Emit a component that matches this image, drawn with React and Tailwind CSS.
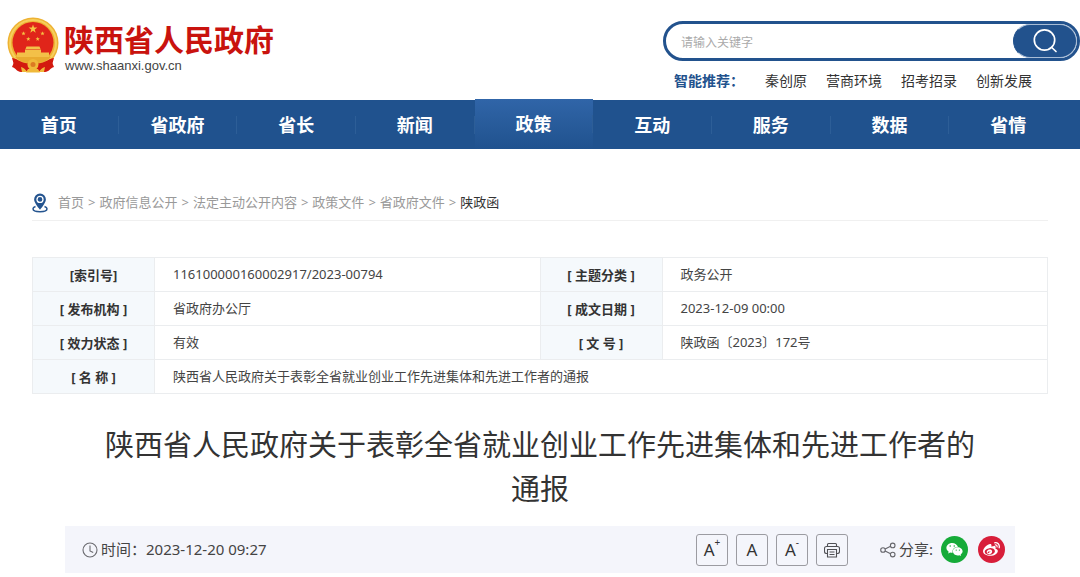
import React, { useState } from 'react'
import { FaWeixin, FaWeibo } from 'react-icons/fa'

const navItems = ['首页', '省政府', '省长', '新闻', '政策', '互动', '服务', '数据', '省情']
const hotWords = ['秦创原', '营商环境', '招考招录', '创新发展']
const crumbs = ['首页', '政府信息公开', '法定主动公开内容', '政策文件', '省政府文件']

const rows = [
  ['[索引号]', '116100000160002917/2023-00794', '[ 主题分类 ]', '政务公开'],
  ['[ 发布机构 ]', '省政府办公厅', '[ 成文日期 ]', '2023-12-09 00:00'],
  ['[ 效力状态 ]', '有效', '[ 文 号 ]', '陕政函〔2023〕172号'],
]

const Star = ({ x, y, r }) => (
  <path
    transform={`translate(${x} ${y}) scale(${r})`}
    fill="#f6c544"
    d="M0-1 .23-.31H.95L.37.12.59.81 0 .39-.59.81-.37.12-.95-.31H-.23Z"
  />
)

const Emblem = () => (
  <svg viewBox="0 0 52 56" className="w-[52px] h-[56px] shrink-0" aria-hidden="true">
    <path d="M8 43 5 50c4 1 5 5 9 5h24c4 0 5-4 9-5l-3-7Z" fill="#d3190f" />
    <circle cx="26" cy="26" r="25.5" fill="#eeb233" />
    <circle cx="26" cy="26" r="23" fill="none" stroke="#f6cf5c" strokeWidth="2" />
    <circle cx="26" cy="25.5" r="20.5" fill="#e0251a" />
    <Star x={26} y={12} r={4.6} />
    <Star x={16.5} y={16.5} r={2.3} />
    <Star x={35.5} y={16.5} r={2.3} />
    <Star x={21.3} y={22} r={2.3} />
    <Star x={30.7} y={22} r={2.3} />
    <path d="M19.5 29.5h13l1 2.5h-15ZM18 32.5h16v3H18ZM10 35.5h32v4.5H10Z" fill="#f3c048" />
    <path d="M8 40h36c-4 4-10 6-18 6S12 44 8 40Z" fill="#e9ab30" />
    <path d="M5 41c4 0 8 4 13 5 4 1 12 1 16 0 5-1 9-5 13-5l-2 7c-4-1-7 3-11 4H18c-4-1-7-5-11-4Z" fill="#d3190f" />
    <circle cx="26" cy="47.5" r="5.5" fill="#f0b93a" />
    <circle cx="26" cy="47.5" r="2.5" fill="#dc7a22" />
    <path d="M14 50c3 1 4 2 6 5h-5ZM38 50c-3 1-4 2-6 5h5ZM21 52h10l2 3.5H19Z" fill="#f0b93a" />
  </svg>
)

const PinIcon = () => (
  <svg viewBox="0 0 16 20" className="w-4 h-5" fill="none" aria-hidden="true">
    <path d="M3.5 13.5C2 14 1 14.7 1 15.7 1 17.5 4 18.7 8 18.7s7-1.2 7-3c0-1-1-1.7-2.5-2.2" stroke="#24548f" strokeWidth="1.5" />
    <path d="M8 .5a5.9 5.9 0 0 0-5.9 5.9C2.1 10 8 16.6 8 16.6S13.9 10 13.9 6.4A5.9 5.9 0 0 0 8 .5Z" fill="#24548f" />
    <circle cx="8" cy="6.4" r="3" fill="#24548f" stroke="#fff" strokeWidth="1.3" />
  </svg>
)

const SearchIcon = () => (
  <svg viewBox="0 0 26 26" className="w-[26px] h-[26px]" fill="none" stroke="#fff" strokeWidth="1.7" strokeLinecap="round" aria-hidden="true">
    <circle cx="12.5" cy="12" r="10.2" />
    <path d="m19.8 19.5 4.2 4" />
  </svg>
)

const ClockIcon = () => (
  <svg viewBox="0 0 16 16" className="w-4 h-4" fill="none" stroke="#6b6b70" strokeWidth="1.1" aria-hidden="true">
    <circle cx="8" cy="8" r="7" />
    <path d="M8 3.5V9l3.2 1.6" />
  </svg>
)

const PrinterIcon = () => (
  <svg viewBox="0 0 16 16" className="w-4 h-4" fill="none" stroke="#505055" strokeWidth="1.1" aria-hidden="true">
    <path d="M3.5 4.5v-2c0-.6.4-1 1-1h7c.6 0 1 .4 1 1v2M3.5 11.5h-1c-1.1 0-2-.9-2-2v-3c0-1.1.9-2 2-2h11c1.1 0 2 .9 2 2v3c0 1.1-.9 2-2 2h-1" />
    <path d="M3.5 7.5h9V15h-9ZM5.5 10h5M5.5 12.5h5" />
  </svg>
)

const ShareIcon = () => (
  <svg viewBox="0 0 16 16" className="w-4 h-4" fill="none" stroke="#66666b" strokeWidth="1.1" aria-hidden="true">
    <circle cx="3" cy="8" r="2.3" />
    <circle cx="12.7" cy="3.4" r="2.3" />
    <circle cx="12.7" cy="12.6" r="2.3" />
    <path d="m5.1 7 5.5-2.7M5.1 9l5.5 2.7" />
  </svg>
)

const toolButton = 'w-8 h-8 flex items-center justify-center rounded-[3px] border border-[#9b9ba1] text-[17px] text-[#333] cursor-pointer'
const labelCell = 'border border-[#ebedef] bg-[#f5f9fc] text-[#333]'
const valueCell = 'border border-[#ebedef] pl-[18px] pb-0.5'

const Header = () => {
  const [keyword, setKeyword] = useState('')

  return (
    <header className="h-[100px] pl-[7px] flex justify-between">
      <a href="#" className="flex items-start pt-[17px] gap-[5px] font-['Liberation_Sans','Noto_Sans_CJK_SC',sans-serif]">
        <Emblem />
        <div className="pt-1.5">
          <div className="text-[30px] leading-9 font-bold text-[#c9130e]">陕西省人民政府</div>
          <div className="pl-px text-[13px] leading-[14px] text-[#444]">www.shaanxi.gov.cn</div>
        </div>
      </a>

      <div className="w-[417px] pt-[21px]">
        <form
          onSubmit={(e) => e.preventDefault()}
          className="h-10 flex items-stretch rounded-full border-[3px] border-[#22528d] overflow-hidden"
        >
          <input
            type="text"
            aria-label="请输入关键字"
            placeholder="请输入关键字"
            value={keyword}
            onChange={(e) => setKeyword(e.target.value)}
            className="flex-1 min-w-0 pl-[15px] pt-1 text-xs text-[#333] outline-none placeholder-[#aaa]"
          />
          <button type="submit" aria-label="搜索" className="w-16 flex items-center justify-center rounded-full bg-[#22528d] border border-[#a9bdd6] border-l-[#22528d] cursor-pointer">
            <SearchIcon />
          </button>
        </form>
        <div className="flex items-center pl-[11px] pt-[10px] text-sm leading-5 text-[#333]">
          <span className="w-[91px] font-bold text-[#22528d]">智能推荐：</span>
          <div className="flex gap-[19px]">
            {hotWords.map((word) => (
              <a key={word} href="#">{word}</a>
            ))}
          </div>
        </div>
      </div>
    </header>
  )
}

const Navbar = () => {
  const [active, setActive] = useState('政策')

  return (
    <nav className="h-[49px] pr-3 grid grid-cols-9 bg-[#20528e] text-lg font-bold text-white">
      {navItems.map((item) => (
        <a
          key={item}
          href="#"
          onClick={() => setActive(item)}
          className={
            item === active
              ? 'group -mt-px h-[50px] flex items-center bg-gradient-to-b from-[#3065a8] to-[#20528e]'
              : 'group h-[49px] flex items-center'
          }
        >
          <span className="flex-1 h-[18px] flex items-center justify-center border-r border-[#2d5e97] group-last:border-transparent">{item}</span>
        </a>
      ))}
    </nav>
  )
}

const Breadcrumb = () => (
  <div className="h-9 flex items-center gap-[10px] border-b border-[#f0f0f0] text-[13px] text-[#999]">
    <PinIcon />
    <div className="flex gap-1">
      {crumbs.map((crumb) => (
        <React.Fragment key={crumb}>
          <a href="#">{crumb}</a>
          <span>&gt;</span>
        </React.Fragment>
      ))}
      <span className="text-[#333]">陕政函</span>
    </div>
  </div>
)

const InfoTable = () => (
  <table className="mt-9 w-full table-fixed border-collapse text-[13px] leading-5 text-[#444]">
    <colgroup>
      <col className="w-[122px]" />
      <col />
      <col className="w-[122px]" />
      <col />
    </colgroup>
    <tbody>
      {rows.map(([label, value, label2, value2]) => (
        <tr key={label} className="h-[34px]">
          <th className={labelCell}>{label}</th>
          <td className={valueCell}>{value}</td>
          <th className={labelCell}>{label2}</th>
          <td className={valueCell}>{value2}</td>
        </tr>
      ))}
      <tr className="h-[34px]">
        <th className={labelCell}>[ 名 称 ]</th>
        <td colSpan={3} className={valueCell}>
          陕西省人民政府关于表彰全省就业创业工作先进集体和先进工作者的通报
        </td>
      </tr>
    </tbody>
  </table>
)

const ArticleBar = () => (
  <div className="h-[47px] pl-[17px] pr-[10px] flex items-center justify-between bg-[#f4f5fb] text-[15px] text-[#444]">
    <div className="flex items-center gap-[3px]">
      <ClockIcon />
      <span>时间：2023-12-20 09:27</span>
    </div>
    <div className="flex items-center">
      <div className="flex gap-2">
        <button className={toolButton} aria-label="放大字体">
          A<sup className="text-[10px] -top-2">+</sup>
        </button>
        <button className={toolButton}>A</button>
        <button className={toolButton} aria-label="缩小字体">
          A<sup className="text-[10px] -top-2">-</sup>
        </button>
        <button className={toolButton} aria-label="打印">
          <PrinterIcon />
        </button>
      </div>
      <div className="pl-8 flex items-center">
        <ShareIcon />
        <span className="pl-[3px] pr-2">分享:</span>
        <div className="flex gap-[10px]">
          <a href="#" aria-label="微信" className="w-[27px] h-[27px] rounded-full bg-[#16ab39] flex items-center justify-center">
            <FaWeixin className="text-white text-[17px]" />
          </a>
          <a href="#" aria-label="微博" className="w-[27px] h-[27px] rounded-full bg-[#d81e3a] flex items-center justify-center">
            <FaWeibo className="text-white text-[17px]" />
          </a>
        </div>
      </div>
    </div>
  </div>
)

const App = () => {
  return (
    <div className="bg-white font-['Noto_Sans','Noto_Sans_CJK_SC',sans-serif]">
      <Header />
      <Navbar />
      <main className="px-8 pt-9">
        <Breadcrumb />
        <InfoTable />
        <article className="px-[33px] pt-[29px]">
          <h1 className="px-8 pb-[15px] text-center text-[29px] leading-[44px] text-[#333]">
            陕西省人民政府关于表彰全省就业创业工作先进集体和先进工作者的通报
          </h1>
          <ArticleBar />
        </article>
      </main>
    </div>
  )
}

export default App
